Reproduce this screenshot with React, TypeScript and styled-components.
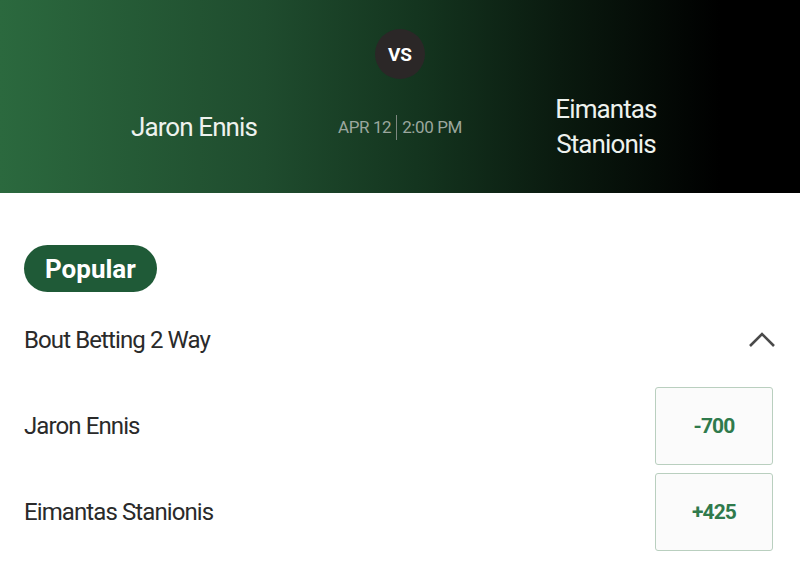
import React from 'react';
import styled, { createGlobalStyle } from 'styled-components';

const GlobalStyle = createGlobalStyle`
  html, body {
    margin: 0;
    padding: 0;
    background: #ffffff;
    font-family: Roboto, "Liberation Sans", sans-serif;
  }
`;

const Page = styled.div`
  width: 800px;
  height: 561px;
  overflow: hidden;
  background: #ffffff;
`;

const Hero = styled.header`
  height: 193px;
  box-sizing: border-box;
  padding: 29px 58px 0;

  display: flex;
  flex-direction: column;
  align-items: center;
  gap: 13px;

  background: linear-gradient(
    90deg,
    #2b693e 0%,
    #1f4c2e 33%,
    #14351f 52%,
    #0a1a0f 70%,
    #000000 90%
  );
`;

const VsBadge = styled.div`
  width: 50px;
  height: 50px;
  border-radius: 50%;
  background: #2b2727;

  display: flex;
  justify-content: center;
  align-items: center;

  color: #ffffff;
  font-weight: 700;
  font-size: 19px;
`;

const Matchup = styled.div`
  align-self: stretch;
  height: 70px;

  display: grid;
  grid-template-columns: 1fr 140px 1fr;
  align-items: center;
`;

const Fighter = styled.div`
  text-align: center;
  color: #eef2ee;
  font-size: 26px;
  line-height: 35px;
  letter-spacing: -0.9px;
`;

const When = styled.div`
  display: flex;
  justify-content: center;
  align-items: center;
  gap: 5px;

  color: #9ba79e;
  font-size: 17px;
  letter-spacing: -0.4px;
`;

const Divider = styled.span`
  width: 1px;
  height: 25px;
  background: #7d877f;
`;

const Content = styled.main`
  padding: 52px 27px 0 24px;
`;

const Pill = styled.div`
  display: inline-flex;
  align-items: center;
  height: 47px;
  padding: 0 21px;
  border-radius: 24px;
  background: #1f5a37;

  color: #ffffff;
  font-weight: 700;
  font-size: 26px;
`;

const MarketHeader = styled.div`
  margin-top: 24px;
  height: 48px;

  display: flex;
  justify-content: space-between;
  align-items: center;
`;

const Title = styled.div`
  color: #2a2a2a;
  font-size: 24px;
  letter-spacing: -0.9px;
`;

const Options = styled.div`
  margin-top: 23px;
  display: flex;
  flex-direction: column;
  gap: 8px;
`;

const OptionRow = styled.div`
  display: flex;
  justify-content: space-between;
  align-items: center;
`;

const OddsButton = styled.button`
  width: 118px;
  height: 78px;
  box-sizing: border-box;
  border: 1px solid #b9cfbf;
  border-radius: 3px;
  background: #fbfbfb;

  color: #2f7a4c;
  font-family: Roboto, "Liberation Sans", sans-serif;
  font-weight: 700;
  font-size: 21px;
  letter-spacing: -0.9px;
`;

const ChevronIcon = styled.svg`
  margin-right: -2px;
`;

const Chevron: React.FC = () => (
  <ChevronIcon width="26" height="16" viewBox="0 0 26 16">
    <polyline
      points="1,14 13,2 25,14"
      fill="none"
      stroke="#4a4a4a"
      strokeWidth="2.6"
    />
  </ChevronIcon>
);

const selections = [
  { name: 'Jaron Ennis', price: '-700' },
  { name: 'Eimantas Stanionis', price: '+425' },
];

export default function App() {
  return (
    <Page>
      <GlobalStyle />
      <Hero>
        <VsBadge>VS</VsBadge>
        <Matchup>
          <Fighter>Jaron Ennis</Fighter>
          <When>
            <span>APR 12</span>
            <Divider />
            <span>2:00 PM</span>
          </When>
          <Fighter>
            Eimantas
            <br />
            Stanionis
          </Fighter>
        </Matchup>
      </Hero>
      <Content>
        <Pill>Popular</Pill>
        <MarketHeader>
          <Title>Bout Betting 2 Way</Title>
          <Chevron />
        </MarketHeader>
        <Options>
          {selections.map((s) => (
            <OptionRow key={s.name}>
              <Title>{s.name}</Title>
              <OddsButton>{s.price}</OddsButton>
            </OptionRow>
          ))}
        </Options>
      </Content>
    </Page>
  );
}
